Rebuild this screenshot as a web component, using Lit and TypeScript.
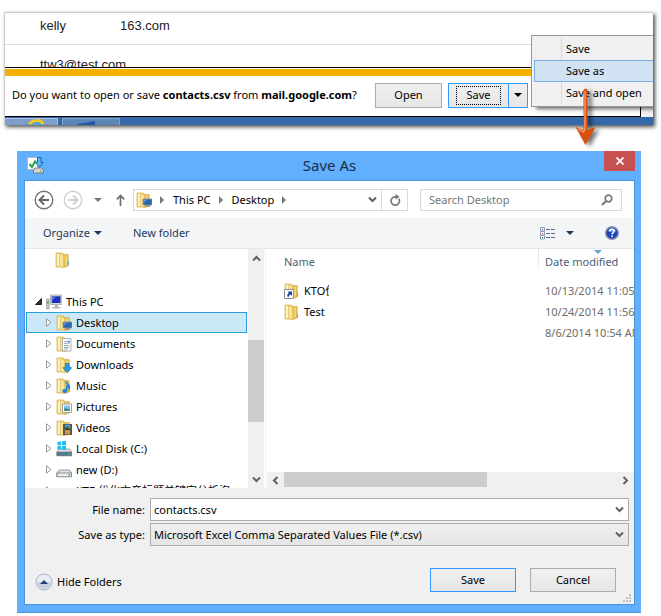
import { LitElement, html, css, svg, nothing } from "lit";
import { customElement, property, state } from "lit/decorators.js";
import { classMap } from "lit/directives/class-map.js";

const folderBase = svg`
  <path d="M1 1h6.500l1 1.500v12.500H1z" fill="#efd27a" stroke="#d9b650" stroke-width=".8"/>
  <path d="M2 2h2v12H2z" fill="#fbf0c0"/>
  <path d="M7.500 2.500h5.700v11.500L9 15.500H7.500z" fill="#e3bd50" stroke="#cfa83f" stroke-width=".6"/>
  <path d="M4.500 1.500L8.500 3v12.700L4.500 14z" fill="#f7e49c" stroke="#dfbe5c" stroke-width=".6"/>
  <path d="M10 3.500h2v10h-2z" fill="#f0d27a"/>
  <path d="M13 9.500h1v4h-1z" fill="#5cb4c4"/>`;

const overlays: Record<string, unknown> = {
  folder: nothing,
  desktop: svg`
    <path d="M7 7h9v6H7z" fill="#2c64ae" stroke="#8b9099" stroke-width=".8"/>
    <path d="M7.500 7.500h4l-4 3.400z" fill="#5e97da"/>
    <path d="M9.500 13.500h4.500v1.200H9.500z" fill="#7c8188"/>`,
  documents: svg`
    <path d="M6.500 2.500h8.500v12.500H6.500z" fill="#fff" stroke="#9aa0a8" stroke-width=".8"/>
    <path d="M8 5.500h3M8 7.500h3M8 9.500h5.500M8 11.500h5.500M8 13h4" stroke="#8294a8" stroke-width=".8"/>
    <path d="M11.500 4.500h2.300v3h-2.300z" fill="#5b9bd8"/>`,
  downloads: svg`
    <path d="M9.500 6.500h3.500v4.200h2.600L11.300 15.600 7 10.700h2.500z" fill="#29a0ea" stroke="#1b70b8" stroke-width=".8"/>`,
  music: svg`
    <path d="M9.700 3.500c.6 2.600 4.700 3.200 3.600 7.300-.3-1.700-1.500-2.600-2.500-2.800v5" fill="none" stroke="#1f86d8" stroke-width="1.600"/>
    <ellipse cx="8.800" cy="13" rx="2.600" ry="2" fill="#1f86d8"/>`,
  pictures: svg`
    <path d="M6.500 5h9v8.500h-9z" fill="#fff" stroke="#8b9099" stroke-width=".8"/>
    <path d="M8 6.500h6v5.500H8z" fill="#7fc0ee"/><path d="M8 12V9.800l2-1 2 1.600 2-.6V12z" fill="#4b8b78"/>`,
  videos: svg`
    <path d="M7 4h9v11H7z" fill="#33383e"/><path d="M9 4.500h5v4.500H9z" fill="#4fa3e0"/>
    <path d="M9 10h5v4.500H9z" fill="#e0902c"/><path d="M9 7.500l2.500-1.500L14 9H9z" fill="#2f6a3a"/>
    <path d="M8 4.500v10.500M15 4.500v10.500" stroke="#d8dce0" stroke-width=".8" stroke-dasharray="1 1"/>`,
  shortcut: svg`
    <path d="M.5 6.500h9v9h-9z" fill="#fff" stroke="#8a8f96"/>
    <path d="M3.500 8.500h4.500v4.500L6.600 11.600C5 12.500 4.600 13.400 4.600 14.400 2.600 13.200 3 10.800 4.900 9.900z" fill="#17479e"/>`,
};

const drive = (accent: string) => svg`
  <path d="M3 8h10.500l2 3v3.500H.8V11z" fill="#dfe1e4" stroke="#85898e" stroke-width=".8"/>
  <path d="M1 11h14.500v3.800H1z" fill="${accent}" stroke="#75797e" stroke-width=".8"/>
  <path d="M12.500 12h1.500v1.800h-1.500z" fill="#2fc04a"/>`;

function icon(kind: string) {
  let body: unknown;
  if (kind === "pc") {
    body = svg`
      <path d="M.6 5h2.600v10H.6z" fill="#c9ccd0" stroke="#888c92" stroke-width=".6"/>
      <path d="M1.200 7h1.400v3H1.200z" fill="#3fbf3a"/>
      <path d="M4.500 1h11.300v9.500H4.500z" fill="#d5d7db" stroke="#999da4" stroke-width=".7"/>
      <path d="M5.800 2.300h8.700v6.700H5.800z" fill="#1a30bd"/><path d="M5.800 2.300h5l-5 4.400z" fill="#5b74e8"/>
      <path d="M9 11h3v2h2.500v1.500h-8V13H9z" fill="#b1b4b9"/>`;
  } else if (kind === "windisk") {
    body = svg`
      ${drive("#4a7f93")}
      <path d="M1.500 1l3.500-.6v3.800H1.500zM5.800.3L10 0v4.200H5.800zM1.500 5H5v3.500l-3.500-.5zM5.800 5H10v4l-4.200-.5z" fill="#19bdf0"/>`;
  } else if (kind === "disk") {
    body = drive("#eceef0");
  } else {
    body = svg`${folderBase}${overlays[kind]}`;
  }
  return html`<svg class="icon" width="16" height="16" viewBox="0 0 16 16" aria-hidden="true">${body}</svg>`;
}

const chevron = (d: string) => html`
  <svg width="9" height="9" viewBox="0 0 9 9" aria-hidden="true">
    <path d="${d}" fill="none" stroke="#606060" stroke-width="2"/>
  </svg>`;
const UP = "M1 6.500L4.500 3 8 6.500";
const DOWN = "M1 2.500L4.500 6 8 2.500";
const LEFT = "M6.500 1L3 4.500 6.500 8";
const RIGHT = "M2.500 1L6 4.500 2.500 8";

const caret = html`
  <svg width="8" height="4" viewBox="0 0 8 4" aria-hidden="true"><path d="M0 0h8L4 4z" fill="currentColor"/></svg>`;

const crumbArrow = html`
  <svg class="crumb-arrow" width="4" height="8" viewBox="0 0 4 8" aria-hidden="true">
    <path d="M0 0l4 4-4 4z" fill="#7a7a7a"/>
  </svg>`;

const shared = css`
  :host {
    display: block;
    font: 11px/16px "Noto Sans", "Noto Sans CJK SC", sans-serif;
    color: #000;
  }
  * {
    box-sizing: border-box;
  }
  button,
  input,
  select {
    font: inherit;
    color: inherit;
    margin: 0;
    padding: 0;
    border: 0;
    background: none;
    border-radius: 0;
    outline: none;
  }
  a {
    color: inherit;
    text-decoration: none;
  }
  svg {
    display: block;
    flex: none;
  }
  ul {
    list-style: none;
    margin: 0;
    padding: 0;
  }
  .push {
    border: 1px solid #acacac;
    background: linear-gradient(#f0f0f0, #e5e5e5);
  }
`;

@customElement("download-bar")
export class DownloadBar extends LitElement {
  static styles = [
    shared,
    css`
      .frame {
        position: relative;
        box-shadow: 2px 2px 4px rgba(0, 0, 0, 0.7);
      }
      .card {
        position: relative;
        overflow: hidden;
        background: #fff;
        border: 1px solid #cfcfcf;
        border-width: 1px 0 0 1px;
      }
      .contacts {
        font: 13px/16px "Liberation Sans", Arial, sans-serif;
        color: #222;
        height: 54px;
        overflow: hidden;
      }
      .contacts li {
        display: grid;
        grid-template-columns: 80px 1fr;
        padding: 12px 0 12px 35px;
        white-space: nowrap;
      }
      .contacts li:first-child {
        padding: 5px 0 10px 35px;
        border-bottom: 1px solid #e0e0e0;
      }
      .prompt {
        display: flex;
        align-items: center;
        gap: 6px;
        height: 50px;
        margin-right: 12px;
        padding: 2px 112px 0 7px;
        border: 1px solid #000;
        border-left: 0;
        box-shadow: inset 0 1px #fff, inset 0 8px #f5b000;
      }
      .body {
        background: #f0f0f0;
      }
      .prompt,
      .contacts {
        background: #fff;
      }
      .prompt p {
        flex: 1;
        margin: 0;
        padding-top: 4px;
        white-space: nowrap;
      }
      .open {
        flex: none;
        width: 67px;
        height: 25px;
        margin-top: 4px;
      }
      .split {
        display: flex;
        flex: none;
        width: 80px;
        height: 25px;
        margin-top: 4px;
        border: 1px solid #3399ff;
        background: linear-gradient(#f0f0f0, #e5e5e5);
      }
      .split .main {
        flex: 1;
        padding: 3px 8px;
      }
      .split .main span {
        display: block;
        height: 17px;
        outline: 1px dotted #000;
      }
      .split .more {
        width: 19px;
        border-left: 1px solid #3399ff;
        display: grid;
        place-items: center;
      }
      .taskbar {
        display: flex;
        gap: 4px;
        height: 8px;
        background: #3568a6;
      }
      .task {
        width: 58px;
        height: 8px;
        overflow: hidden;
        margin-top: 1px;
        background: #5c85b8;
        border: 1px solid #86a5cd;
        border-bottom: 0;
        padding-left: 14px;
      }
      .task:first-child {
        width: 53px;
        background: #7e9fc9;
        border-color: #a9c0de;
        border-left: 0;
        padding-left: 19px;
      }
      .menu {
        position: absolute;
        top: 22px;
        right: 0;
        width: 122px;
        padding: 2px 0 2px 2px;
        border: 1px solid #979797;
        border-right: 0;
        background: linear-gradient(#d9d9d9, #d9d9d9) 29px 2px / 1px 66px no-repeat #f0f0f0;
        box-shadow: 4px 3px 4px -1px rgba(0, 0, 0, 0.6);
      }
      .menu button {
        display: block;
        width: 100%;
        height: 22px;
        padding-left: 31px;
        border: 1px solid transparent;
        border-right: 0;
        text-align: left;
        white-space: nowrap;
      }
      .menu .hot {
        background: #d1e2f3;
        border-color: #78aee5;
      }
      .pointer {
        position: absolute;
        top: 76px;
        right: 57px;
        filter: drop-shadow(4px 2px 2px rgba(0, 0, 0, 0.55));
      }
    `,
  ];

  @state() private hot = "Save as";

  render() {
    return html`
      <section class="frame">
        <div class="card">
          <ul class="contacts">
            <li><span>kelly</span><span>163.com</span></li>
            <li><span>ttw3@test.com</span></li>
          </ul>
          <div class="body">
            <div class="prompt">
              <p>Do you want to open or save <b>contacts.csv</b> from <b>mail.google.com</b>?</p>
              <button class="push open">Open</button>
              <div class="split">
                <button class="main"><span>Save</span></button>
                <button class="more" aria-label="More save options">${caret}</button>
              </div>
            </div>
          </div>
          <div class="taskbar">
            <div class="task">
              <svg width="22" height="14" viewBox="0 0 22 14" aria-hidden="true">
                <path d="M2 9c2-6 12-8 15-3" fill="none" stroke="#39a6e6" stroke-width="3"/>
                <path d="M5 5C9 1 17 0 19 5" fill="none" stroke="#f7c81e" stroke-width="3"/>
              </svg>
            </div>
            <div class="task">
              <svg width="20" height="14" viewBox="0 0 20 14" aria-hidden="true">
                <path d="M0 5l18-3v12H0z" fill="#2257a4"/>
              </svg>
            </div>
          </div>
          <div class="menu" role="menu">
            ${["Save", "Save as", "Save and open"].map(
              (label) => html`<button
                role="menuitem"
                class=${classMap({ hot: this.hot === label })}
                @mouseenter=${() => (this.hot = label)}
              >${label}</button>`
            )}
          </div>
        </div>
        <svg class="pointer" width="21" height="58" viewBox="0 0 21 58" aria-hidden="true">
          <path d="M8.500 2Q10.500-1 12.500 2V42l8-3L10.500 57 .5 39l8 3z" fill="#d8500e"/>
          <path d="M10 3v38l-1.500 3L3 41" fill="none" stroke="#f3a77c" stroke-width="1.200"/>
        </svg>
      </section>
    `;
  }
}

interface TreeNode {
  label: string;
  kind: string;
}

@customElement("folder-tree")
export class FolderTree extends LitElement {
  static styles = [
    shared,
    css`
      :host {
        display: grid;
        grid-template-columns: 1fr 16px;
        height: 239px;
        overflow: hidden;
      }
      .rows {
        overflow: hidden;
        padding: 0 1px;
        height: 239px;
      }
      .row {
        display: flex;
        align-items: center;
        height: 21px;
        width: 100%;
        padding-left: 19px;
        border: 1px solid transparent;
        white-space: nowrap;
        overflow: hidden;
        text-align: left;
      }
      .row .icon {
        margin: 0 4px;
      }
      .row.root {
        padding-left: 8px;
      }
      .row.loose {
        padding-left: 24px;
        margin-bottom: 21px;
      }
      .row.selected {
        background: #cbe8f8;
        border-color: #26a0da;
      }
      .bar {
        display: flex;
        flex-direction: column;
        align-items: center;
        background: #f0f0f0;
        padding: 5px 0 4px;
      }
      .thumb {
        width: 16px;
        height: 82px;
        margin-top: 77px;
        margin-bottom: auto;
        background: #cdcdcd;
      }
    `,
  ];

  @property({ attribute: false }) nodes: TreeNode[] = [];
  @state() private selected = "Desktop";

  render() {
    return html`
      <ul class="rows">
        <li><div class="row loose">${icon("folder")}</div></li>
        <li>
          <button class="row root">
            <svg width="7" height="7" viewBox="0 0 7 7" aria-hidden="true"><path d="M6.500 .5v6h-6z" fill="#333" stroke="#222"/></svg>
            ${icon("pc")}<span>This PC</span>
          </button>
        </li>
        ${this.nodes.map(
          (n) => html`<li>
            <button
              class=${classMap({ row: true, selected: this.selected === n.label })}
              @click=${() => (this.selected = n.label)}
            >
              <svg width="6" height="9" viewBox="0 0 6 9" aria-hidden="true">
                <path d="M.5 .8v7.400l4.500-3.700z" fill="#fff" stroke="#999"/>
              </svg>
              ${icon(n.kind)}<span>${n.label}</span>
            </button>
          </li>`
        )}
      </ul>
      <div class="bar">${chevron(UP)}<div class="thumb"></div>${chevron(DOWN)}</div>
    `;
  }
}

@customElement("file-list")
export class FileList extends LitElement {
  static styles = [
    shared,
    css`
      :host {
        display: flex;
        flex-direction: column;
        min-width: 0;
        overflow: hidden;
      }
      table {
        width: 100%;
        table-layout: fixed;
        border-collapse: collapse;
        margin-bottom: auto;
      }
      th,
      td {
        padding: 0;
        height: 21px;
        text-align: left;
        font-weight: normal;
        white-space: nowrap;
        overflow: hidden;
      }
      th {
        height: 31px;
        padding: 5px 0 0 18px;
        vertical-align: top;
        color: #4c607a;
      }
      th.date {
        width: 96px;
        padding-left: 7px;
        background: linear-gradient(#d5e0ec, #eef3f8) 0 0 / 1px 20px no-repeat;
      }
      td.date {
        padding-left: 7px;
        color: #6d6d6d;
      }
      .file {
        display: flex;
        align-items: center;
        gap: 4px;
        padding-left: 18px;
      }
      .clip {
        width: 25px;
        overflow: hidden;
      }
      .head {
        position: relative;
      }
      .sort {
        position: absolute;
        top: -4px;
        left: 49px;
        color: #5fa3c9;
      }
      .bar {
        display: flex;
        align-items: center;
        height: 16px;
        margin-left: 1px;
        padding: 0 4px;
        background: #f0f0f0;
      }
      .thumb {
        width: 203px;
        height: 15px;
        margin: 0 auto 1px 4px;
        background: #cdcdcd;
      }
    `,
  ];

  render() {
    return html`
      <table>
        <thead>
          <tr>
            <th>Name</th>
            <th class="date"><div class="head"><span class="sort">${caret}</span>Date modified</div></th>
          </tr>
        </thead>
        <tbody>
          <tr>
            <td><div class="file">${icon("shortcut")}<span class="clip">KTO优</span></div></td>
            <td class="date">10/13/2014 11:05</td>
          </tr>
          <tr>
            <td><div class="file">${icon("folder")}<span>Test</span></div></td>
            <td class="date">10/24/2014 11:56</td>
          </tr>
          <tr>
            <td></td>
            <td class="date">8/6/2014 10:54 AM</td>
          </tr>
        </tbody>
      </table>
      <div class="bar">${chevron(LEFT)}<div class="thumb"></div>${chevron(RIGHT)}</div>
    `;
  }
}

@customElement("save-dialog")
export class SaveDialog extends LitElement {
  static styles = [
    shared,
    css`
      .window {
        background: #60b0ff;
        border-bottom: 1px solid #4a94dc;
        padding: 0 6px 7px 7px;
      }
      .title {
        display: grid;
        grid-template-columns: 31px 1fr 31px;
        height: 29px;
      }
      .title h1 {
        margin: 0;
        font-size: 15px;
        line-height: 29px;
        font-weight: normal;
        text-align: center;
        color: #1c2d40;
      }
      .title > svg {
        margin: 6px 0 0 3px;
      }
      .close {
        height: 20px;
        background: #c75050;
        display: grid;
        place-items: center;
      }
      .client {
        position: relative;
        border: 1px solid #4a94dc;
        background: #fff;
      }
      .nav {
        display: flex;
        align-items: center;
        height: 37px;
        padding: 0 12px 0 9px;
      }
      .nav button {
        flex: none;
      }
      .fwd {
        margin-left: 9px;
      }
      .recent {
        margin-left: 11px;
        color: #777;
      }
      .up {
        margin: 0 8px 0 14px;
      }
      .address {
        display: flex;
        align-items: center;
        flex: 1;
        height: 22px;
        border: 1px solid #d9d9d9;
        padding-left: 2px;
      }
      .crumb-arrow {
        margin: 0 9px 0 8px;
      }
      .address .drop {
        margin: 0 4px 0 auto;
      }
      .refresh {
        align-self: stretch;
        width: 26px;
        display: grid;
        place-items: center;
        border-left: 1px solid #d9d9d9;
      }
      .search {
        display: flex;
        align-items: center;
        flex: 0 1 202px;
        height: 22px;
        margin-left: 12px;
        padding: 0 8px;
        border: 1px solid #d9d9d9;
      }
      .search input {
        flex: 1;
        min-width: 0;
      }
      .search input::placeholder {
        color: #767676;
        opacity: 1;
      }
      .tools {
        display: flex;
        align-items: center;
        height: 31px;
        padding: 0 15px 0 18px;
        background: #f4f5f7;
        border-bottom: 1px solid #e6e7e9;
        color: #1e395b;
      }
      .tools button {
        display: flex;
        align-items: center;
        gap: 4px;
      }
      .new {
        margin: 0 auto 0 31px;
      }
      .view {
        margin-right: 31px;
      }
      .tools .view {
        gap: 11px;
      }
      .panes {
        display: grid;
        grid-template-columns: 239px minmax(0, 1fr);
        height: 239px;
      }
      file-list {
        margin-left: 1px;
        border-left: 1px solid #f0f0f0;
      }
      .foot {
        background: #f0f0f0;
        padding: 10px 5px 12px 10px;
      }
      .fields {
        display: grid;
        grid-template-columns: 110px 1fr;
        column-gap: 5px;
        row-gap: 2px;
        align-items: center;
      }
      .fields label {
        text-align: right;
      }
      .combo {
        position: relative;
        display: flex;
        align-items: center;
        height: 23px;
        border: 1px solid #abadb3;
        background: #fff;
      }
      .combo.list {
        background: linear-gradient(#f0f0f0, #e5e5e5);
        border-color: #acacac;
      }
      .combo input,
      .combo select {
        flex: 1;
        min-width: 0;
        height: 21px;
        padding: 0 20px 0 3px;
        appearance: none;
      }
      .combo svg {
        position: absolute;
        right: 4px;
        pointer-events: none;
      }
      .actions {
        display: flex;
        align-items: center;
        gap: 14px;
        margin-top: 22px;
        padding-right: 13px;
      }
      .hide {
        display: flex;
        align-items: center;
        gap: 4px;
        margin-right: auto;
        padding-top: 4px;
      }
      .actions .push {
        width: 86px;
        height: 24px;
      }
      .actions .default {
        border-color: #3399ff;
      }
      .grip {
        position: absolute;
        right: 3px;
        bottom: 2px;
      }
    `,
  ];

  private nodes: TreeNode[] = [
    { label: "Desktop", kind: "desktop" },
    { label: "Documents", kind: "documents" },
    { label: "Downloads", kind: "downloads" },
    { label: "Music", kind: "music" },
    { label: "Pictures", kind: "pictures" },
    { label: "Videos", kind: "videos" },
    { label: "Local Disk (C:)", kind: "windisk" },
    { label: "new (D:)", kind: "disk" },
    { label: "KTE 优化文章标题关键字分析泡", kind: "disk" },
  ];

  render() {
    return html`
      <section class="window" role="dialog" aria-label="Save As">
        <header class="title">
          <svg width="17" height="17" viewBox="0 0 17 17" aria-hidden="true">
            <path d="M.5 .5h10v12H.5z" fill="#fff" stroke="#b4b8bd"/>
            <path d="M2.500 7l2.500 3L8.500 3.500" fill="none" stroke="#2fa53c" stroke-width="2"/>
            <path d="M10.500 .5h3.500v5h2.300L12.300 10 8.300 5.500h2.200z" fill="#5db8f4" stroke="#1866b0"/>
            <path d="M8 11h7l1.500 2v3h-10v-3z" fill="#d4d6da" stroke="#787c82"/>
            <path d="M13 13.500h2v1h-2z" fill="#3fbf3a"/>
          </svg>
          <h1>Save As</h1>
          <button class="close" aria-label="Close">
            <svg width="8" height="8" viewBox="0 0 8 8"><path d="M.5 .5l7 7M7.500 .5l-7 7" stroke="#fff" stroke-width="1.700"/></svg>
          </button>
        </header>
        <div class="client">
          <nav class="nav">
            <button aria-label="Back">
              <svg width="20" height="20" viewBox="0 0 20 20">
                <circle cx="10" cy="10" r="8.800" fill="none" stroke="#757575" stroke-width="1.400"/>
                <path d="M15 10H6M10 5.500L5.500 10l4.500 4.500" fill="none" stroke="#666" stroke-width="2"/>
              </svg>
            </button>
            <button class="fwd" aria-label="Forward">
              <svg width="20" height="20" viewBox="0 0 20 20">
                <circle cx="10" cy="10" r="8.800" fill="none" stroke="#cfcfcf" stroke-width="1.400"/>
                <path d="M5 10h9M10 5.500l4.500 4.500-4.500 4.500" fill="none" stroke="#cfcfcf" stroke-width="2"/>
              </svg>
            </button>
            <button class="recent" aria-label="Recent locations">${caret}</button>
            <button class="up" aria-label="Up">
              <svg width="9" height="12" viewBox="0 0 9 12">
                <path d="M4.500 12V2M.8 5.300l3.700-3.800 3.700 3.800" fill="none" stroke="#707070" stroke-width="1.700"/>
              </svg>
            </button>
            <div class="address">
              ${icon("desktop")}${crumbArrow}<a href="#pc">This PC</a>${crumbArrow}<a href="#desktop">Desktop</a>${crumbArrow}
              <button class="drop" aria-label="Previous locations">${chevron(DOWN)}</button>
              <button class="refresh" aria-label="Refresh">
                <svg width="12" height="12" viewBox="0 0 12 12">
                  <path d="M9.800 4.800A4.200 4.200 0 1 1 6 2.800h1.500" fill="none" stroke="#7a7a7a" stroke-width="1.700"/>
                  <path d="M6.500 0l4 2.800-4 2.900z" fill="#7a7a7a"/>
                </svg>
              </button>
            </div>
            <div class="search">
              <input type="search" placeholder="Search Desktop" aria-label="Search Desktop" />
              <svg width="12" height="12" viewBox="0 0 12 12" aria-hidden="true">
                <circle cx="7.500" cy="4.500" r="3.300" fill="none" stroke="#777" stroke-width="1.700"/>
                <path d="M5 7L1 11" stroke="#777" stroke-width="2.200"/>
              </svg>
            </div>
          </nav>
          <div class="tools">
            <button>Organize ${caret}</button>
            <button class="new">New folder</button>
            <button class="view" aria-label="Change your view">
              <svg width="15" height="13" viewBox="0 0 15 13">
                <path d="M.5 .5h4v3.500h-4zM.5 4.500h4v3.500h-4zM.5 8.500h4V12h-4z" fill="#fff" stroke="#8c9db3"/>
                <path d="M2 2h1v1H2z" fill="#33588e"/><path d="M2 6h1v1H2z" fill="#c03a3a"/><path d="M2 10h1v1H2z" fill="#33588e"/>
                <path d="M6 2.500h4M11 2.500h4M6 6.500h4M11 6.500h4M6 10.500h4M11 10.500h4" stroke="#5a6e8c"/>
              </svg>
              ${caret}
            </button>
            <button aria-label="Help">
              <svg width="14" height="14" viewBox="0 0 14 14">
                <circle cx="7" cy="7" r="6.300" fill="#1f44b8" stroke="#8995ae" stroke-width="1.400"/>
                <path d="M2.500 5a5 5 0 0 1 9 0q-4.500 2-9 0z" fill="#6f92e4"/>
                <path d="M4.800 5.300Q5 3.200 7.100 3.200 9.300 3.300 9.200 5 9 6.200 7.800 6.900 7.100 7.400 7.100 8.500" fill="none" stroke="#fff" stroke-width="1.500"/>
                <path d="M6.300 9.500h1.600V11H6.300z" fill="#fff"/>
              </svg>
            </button>
          </div>
          <div class="panes">
            <folder-tree .nodes=${this.nodes}></folder-tree>
            <file-list></file-list>
          </div>
          <div class="foot">
            <div class="fields">
              <label for="name">File name:</label>
              <div class="combo"><input id="name" .value=${"contacts.csv"} />${chevron(DOWN)}</div>
              <label for="type">Save as type:</label>
              <div class="combo list">
                <select id="type"><option>Microsoft Excel Comma Separated Values File (*.csv)</option></select>
                ${chevron(DOWN)}
              </div>
            </div>
            <div class="actions">
              <button class="hide">
                <svg width="18" height="18" viewBox="0 0 18 18" aria-hidden="true">
                  <circle cx="9" cy="9" r="8" fill="#e8edf5" stroke="#a9b6cf"/>
                  <path d="M2 9a7 7 0 0 0 14 0z" fill="#cbd1db"/>
                  <path d="M5 11h8L9 7z" fill="#24417e"/>
                </svg>
                Hide Folders
              </button>
              <button class="push default">Save</button>
              <button class="push">Cancel</button>
            </div>
          </div>
          <svg class="grip" width="8" height="8" viewBox="0 0 8 8" aria-hidden="true">
            <path d="M6 0h2v2H6zM3 3h2v2H3zM6 3h2v2H6zM0 6h2v2H0zM3 6h2v2H3zM6 6h2v2H6z" fill="#bfbfbf"/>
          </svg>
        </div>
      </section>
    `;
  }
}

@customElement("app-root")
export class AppRoot extends LitElement {
  static styles = css`
    :host {
      display: block;
      background: #fff;
      padding: 12px 8px 3px 4px;
    }
    save-dialog {
      margin: 26px 12px 0 13px;
    }
  `;

  render() {
    return html`<download-bar></download-bar><save-dialog></save-dialog>`;
  }
}
